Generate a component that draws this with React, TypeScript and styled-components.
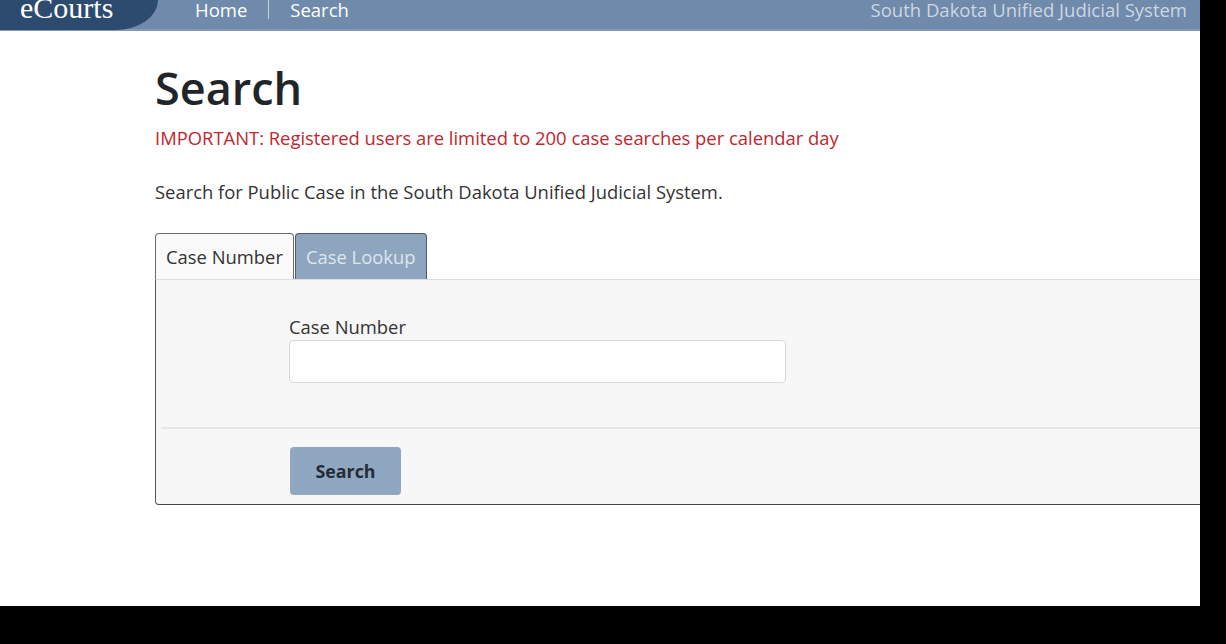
import { useState } from "react";
import styled, { createGlobalStyle } from "styled-components";

const GlobalStyle = createGlobalStyle`
	html, body {
		margin: 0;
		padding: 0;
		background: #000;
	}
	body {
		font-family: "Open Sans", "Noto Sans", "Liberation Sans", sans-serif;
	}
`;

const Page = styled.div`
	width: 1200px;
	height: 606px;
	background: #fff;
	overflow: hidden;
	display: flex;
	flex-direction: column;
`;

const Header = styled.header`
	height: 29px;
	display: flex;
	align-items: flex-start;
	background: #6f8aab;
	border-bottom: 2px solid #8499b4;
`;

const Brand = styled.div`
	width: 158px;
	height: 30px;
	padding-left: 20px;
	box-sizing: border-box;
	background: #2d4b6f;
	border-bottom-right-radius: 44px 31px;
	color: #fff;
	font-family: "Liberation Serif", "DejaVu Serif", serif;
	font-size: 30px;
	line-height: 30px;
	overflow: hidden;
	white-space: nowrap;
	position: relative;
	z-index: 1;
`;

const BrandText = styled.span`
	display: block;
	margin-top: -7px;
`;

const Nav = styled.nav`
	display: flex;
	align-items: flex-start;
	margin-left: 37px;
	flex: 1;
	height: 29px;
`;

const NavLink = styled.a`
	color: #fff;
	font-size: 18.5px;
	line-height: 19px;
	text-decoration: none;
`;

const NavDivider = styled.span`
	width: 1px;
	height: 19px;
	margin: 0 21px;
	background: #c9d4e1;
`;

const SiteName = styled.div`
	padding-right: 13px;
	color: #cdd7e3;
	font-size: 18.5px;
	line-height: 19px;
`;

const Main = styled.main`
	padding: 0 0 0 155px;
	color: #212529;
`;

const Title = styled.h1`
	margin: 30px 0 0;
	font-size: 45px;
	line-height: 53px;
	font-weight: 600;
	color: #212529;
`;

const Notice = styled.p`
	margin: 12px 0 0;
	font-size: 18.4px;
	line-height: 24px;
	color: #c0262f;
`;

const Intro = styled.p`
	margin: 30px 0 0;
	font-size: 18.4px;
	line-height: 24px;
	color: #333;
`;

const TabList = styled.div`
	display: flex;
	margin-top: 29px;
	height: 46px;
	align-items: stretch;
`;

const Tab = styled.button<{ $active: boolean }>`
	font-family: inherit;
	font-size: 18.4px;
	padding: 0 10px;
	border: 1px solid ${({ $active }) => ($active ? "#6b6b6b" : "#4b5b6c")};
	border-bottom: none;
	border-radius: 4px 4px 0 0;
	background: ${({ $active }) => ($active ? "#fafafa" : "#8ea5bf")};
	color: ${({ $active }) => ($active ? "#333" : "#dde6ef")};
	cursor: pointer;
	margin-right: 1px;
`;

const Panel = styled.section`
	margin-right: -10px;
	height: 226px;
	box-sizing: border-box;
	background: #f7f7f7;
	border-top: 1px solid #dedede;
	border-left: 1px solid #555;
	border-bottom: 1px solid #444;
	border-bottom-left-radius: 4px;
	display: flex;
	flex-direction: column;
	padding-left: 5px;
`;

const FieldArea = styled.div`
	padding: 36px 0 0 128px;
	height: 149px;
	box-sizing: border-box;
	border-bottom: 2px solid #e6e6e6;
`;

const Label = styled.label`
	display: block;
	font-size: 18.4px;
	line-height: 22px;
	color: #333;
	margin-bottom: 2px;
`;

const Input = styled.input`
	display: block;
	width: 497px;
	height: 43px;
	box-sizing: border-box;
	border: 1px solid #d9d9d9;
	border-radius: 4px;
	background: #fff;
	font-family: inherit;
	font-size: 18px;
	padding: 0 12px;
	outline: none;
`;

const Actions = styled.div`
	padding: 18px 0 0 129px;
`;

const SearchButton = styled.button`
	width: 111px;
	height: 48px;
	border: none;
	border-radius: 4px;
	background: #8fa7c0;
	color: #262c36;
	font-family: inherit;
	font-size: 17.8px;
	font-weight: 700;
	cursor: pointer;
`;

export default function App() {
	const [activeTab, setActiveTab] = useState<"number" | "lookup">("number");
	const [caseNumber, setCaseNumber] = useState("");

	return (
		<>
			<GlobalStyle />
			<Page>
				<Header>
					<Brand>
						<BrandText>eCourts</BrandText>
					</Brand>
					<Nav>
						<NavLink href="#">Home</NavLink>
						<NavDivider />
						<NavLink href="#">Search</NavLink>
					</Nav>
					<SiteName>South Dakota Unified Judicial System</SiteName>
				</Header>
				<Main>
					<Title>Search</Title>
					<Notice>
						IMPORTANT: Registered users are limited to 200 case searches per
						calendar day
					</Notice>
					<Intro>
						Search for Public Case in the South Dakota Unified Judicial System.
					</Intro>
					<TabList>
						<Tab
							$active={activeTab === "number"}
							onClick={() => setActiveTab("number")}
						>
							Case Number
						</Tab>
						<Tab
							$active={activeTab === "lookup"}
							onClick={() => setActiveTab("lookup")}
						>
							Case Lookup
						</Tab>
					</TabList>
					<Panel>
						<FieldArea>
							<Label htmlFor="caseNumber">Case Number</Label>
							<Input
								id="caseNumber"
								type="text"
								value={caseNumber}
								onChange={(e) => setCaseNumber(e.target.value)}
							/>
						</FieldArea>
						<Actions>
							<SearchButton>Search</SearchButton>
						</Actions>
					</Panel>
				</Main>
			</Page>
		</>
	);
}
